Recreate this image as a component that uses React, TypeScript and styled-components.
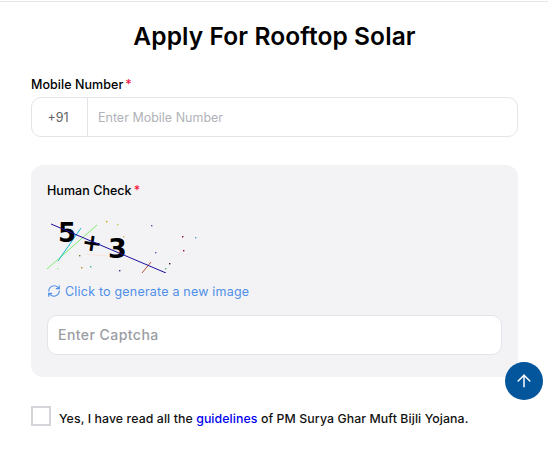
import styled, { createGlobalStyle } from "styled-components";
import { ArrowUp, RefreshCw } from "lucide-react";

const GlobalStyle = createGlobalStyle`
  html, body {
    margin: 0;
    padding: 0;
    background: #fff;
    overflow: hidden;
  }
  * {
    box-sizing: border-box;
  }
`;

const Page = styled.div`
  width: 548px;
  height: 449px;
  padding: 1px 30px 0 31px;
  font-family: Inter, "Open Sans", sans-serif;
  color: #000;
`;

const TopRule = styled.div`
  height: 1px;
  margin: 0 -30px 0 -31px;
  background: #e6e6ea;
`;

const Title = styled.h1`
  margin: 0;
  padding-top: 18px;
  height: 74px;
  font-size: 24.5px;
  line-height: 32px;
  font-weight: 600;
  text-align: center;
  letter-spacing: 0.1px;
`;

const Label = styled.label`
  display: block;
  font-size: 12.5px;
  line-height: 18px;
  font-weight: 500;
  letter-spacing: 0.05px;
`;

const Required = styled.span`
  color: #f5123d;
  margin-left: 2px;
`;

const PhoneField = styled.div`
  display: flex;
  height: 40px;
  margin-top: 3px;
  border: 1px solid #e3e4ea;
  border-radius: 10px;
  background: #fff;
`;

const Prefix = styled.div`
  width: 56px;
  padding-right: 3px;
  border-right: 1px solid #e3e4ea;
  display: flex;
  align-items: center;
  justify-content: center;
  font-size: 12.5px;
  color: #5f6368;
`;

const PhoneInput = styled.input`
  flex: 1;
  min-width: 0;
  border: 0;
  background: transparent;
  outline: none;
  padding: 0 10px;
  font-family: inherit;
  font-size: 12.5px;
  &::placeholder {
    color: #b0b3ba;
    opacity: 1;
  }
`;

const CheckPanel = styled.section`
  margin-top: 28px;
  height: 212px;
  padding: 17px 16px 0;
  background: #f3f3f6;
  border-radius: 12px;
`;

const CaptchaImage = styled.svg`
  display: block;
  width: 150px;
  height: 60px;
  margin-top: 13px;
`;

const RefreshLink = styled.a`
  display: flex;
  align-items: center;
  gap: 4px;
  height: 18px;
  margin-top: 9px;
  font-size: 12.5px;
  letter-spacing: 0.2px;
  color: #4f8fe8;
  cursor: pointer;
`;

const CaptchaInput = styled.input`
  display: block;
  width: 455px;
  height: 40px;
  margin-top: 15px;
  padding: 0 10px 2px;
  border: 1px solid #e3e4ea;
  border-radius: 10px;
  background: #fff;
  outline: none;
  font-family: inherit;
  font-size: 14px;
  font-weight: 500;
  letter-spacing: 0.45px;
  &::placeholder {
    color: #9b9da3;
    opacity: 1;
  }
`;

const ConsentRow = styled.div`
  display: flex;
  align-items: center;
  gap: 8px;
  margin-top: 29px;
  font-size: 12.3px;
  font-weight: 500;
  letter-spacing: 0.1px;
  color: #111;
`;

const CheckBox = styled.span`
  width: 20px;
  height: 20px;
  flex: none;
  border: 2px solid #d3d5da;
  background: #fff;
`;

const ConsentText = styled.span`
  padding-top: 4px;
`;

const GuideLink = styled.a`
  color: #0000ee;
`;

const ScrollTop = styled.button`
  position: fixed;
  left: 505px;
  top: 362px;
  width: 38px;
  height: 38px;
  padding: 0;
  border: 0;
  border-radius: 50%;
  background: #03559c;
  color: #fff;
  display: flex;
  align-items: center;
  justify-content: center;
`;

const specks: [number, number, string][] = [
  [59, 8, "#c9a400"], [70, 11, "#c9c94a"], [104, 12, "#5050c0"], [76, 23, "#e0b070"],
  [135, 23, "#7a1030"], [148, 24, "#50a0d0"], [108, 39, "#6060c0"], [136, 37, "#a01030"],
  [32, 42, "#807020"], [34, 54, "#b09020"], [43, 53, "#40b0a0"], [72, 57, "#303090"],
  [122, 50, "#401040"], [118, 55, "#50b080"], [10, 55, "#a0f090"],
];

const Captcha = () => (
  <CaptchaImage viewBox="0 0 150 60">
    <line x1="0" y1="56" x2="50" y2="12" stroke="#7dee6b" strokeWidth="1" />
    <line x1="11" y1="48" x2="34" y2="15" stroke="#16b6d0" strokeWidth="1" />
    <line x1="39" y1="41" x2="60" y2="43" stroke="#f9e2e0" strokeWidth="1" />
    <line x1="95" y1="60" x2="104" y2="49" stroke="#b5533c" strokeWidth="1" />
    <text x="11" y="29" fontFamily="DejaVu Sans" fontWeight="700" fontSize="26" fill="#000">5</text>
    <text x="35" y="38" fontFamily="DejaVu Sans" fontWeight="700" fontSize="24" fill="#000" transform="rotate(8 45 30)">+</text>
    <text x="61" y="45" fontFamily="DejaVu Sans" fontWeight="700" fontSize="27" fill="#000">3</text>
    <line x1="4" y1="11" x2="119" y2="60" stroke="#1c0f9c" strokeWidth="1" />
    {specks.map(([x, y, fill]) => (
      <rect key={`${x}-${y}`} x={x} y={y} width="1.4" height="1.4" fill={fill} />
    ))}
  </CaptchaImage>
);

export default function App() {
  return (
    <>
      <GlobalStyle />
      <Page>
        <TopRule />
        <Title>Apply For Rooftop Solar</Title>
        <Label>
          Mobile Number<Required>*</Required>
        </Label>
        <PhoneField>
          <Prefix>+91</Prefix>
          <PhoneInput placeholder="Enter Mobile Number" />
        </PhoneField>
        <CheckPanel>
          <Label>
            Human Check<Required>*</Required>
          </Label>
          <Captcha />
          <RefreshLink>
            <RefreshCw size={14} strokeWidth={2} />
            Click to generate a new image
          </RefreshLink>
          <CaptchaInput placeholder="Enter Captcha" />
        </CheckPanel>
        <ConsentRow>
          <CheckBox />
          <ConsentText>
            Yes, I have read all the <GuideLink>guidelines</GuideLink> of PM Surya Ghar Muft Bijli Yojana.
          </ConsentText>
        </ConsentRow>
        <ScrollTop aria-label="Back to top">
          <ArrowUp size={20} strokeWidth={1.8} />
        </ScrollTop>
      </Page>
    </>
  );
}
